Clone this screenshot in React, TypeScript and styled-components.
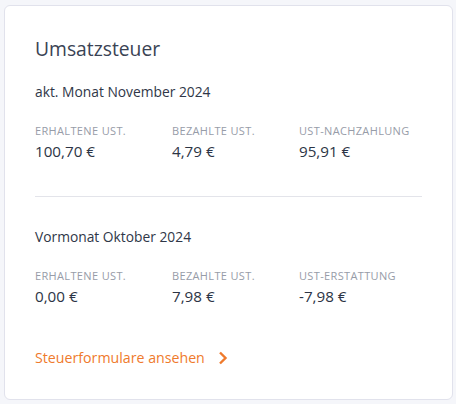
import styled, { createGlobalStyle } from "styled-components";

const GlobalStyle = createGlobalStyle`
  body {
    margin: 0;
    background: #f5f6fa;
    font-family: "Open Sans", "Noto Sans", sans-serif;
  }
`;

const Page = styled.div`
  padding: 5px 3px 4px 4px;
`;

const Card = styled.div`
  background: #fff;
  border: 1px solid #e1e2ec;
  border-radius: 6px;
  padding: 30px 30px 31px 30px;
  height: 395px;
  box-sizing: border-box;
`;

const Title = styled.h2`
  margin: 0;
  font-size: 19.3px;
  font-weight: 400;
  line-height: 26px;
  color: #3a4354;
`;

const Period = styled.div<{ $top: number }>`
  margin-top: ${p => p.$top}px;
  font-size: 13.8px;
  line-height: 20px;
  color: #2f3748;
`;

const Figures = styled.div`
  display: grid;
  grid-template-columns: 137px 127px auto;
  margin-top: 21px;
`;

const Figure = styled.div`
  display: flex;
  flex-direction: column;
  gap: 1px;
`;

const Label = styled.span`
  font-size: 11px;
  line-height: 16px;
  letter-spacing: 0.35px;
  text-transform: uppercase;
  color: #979ca8;
`;

const Value = styled.span`
  font-size: 15.2px;
  line-height: 22px;
  color: #2c3445;
`;

const Divider = styled.hr`
  border: 0;
  border-top: 1px solid #e3e4ea;
  margin: 34px 0 0;
`;

const Link = styled.a`
  display: inline-flex;
  align-items: center;
  gap: 13px;
  margin-top: 41px;
  font-size: 14.2px;
  line-height: 20px;
  color: #ef7a2c;
  text-decoration: none;
  cursor: pointer;
`;

const figures = [
  {
    period: "akt. Monat November 2024",
    items: [
      ["Erhaltene USt.", "100,70 €"],
      ["Bezahlte USt.", "4,79 €"],
      ["USt-Nachzahlung", "95,91 €"],
    ],
  },
  {
    period: "Vormonat Oktober 2024",
    items: [
      ["Erhaltene USt.", "0,00 €"],
      ["Bezahlte USt.", "7,98 €"],
      ["USt-Erstattung", "-7,98 €"],
    ],
  },
];

function Chevron() {
  return (
    <svg width="10" height="14" viewBox="0 0 10 14" fill="none">
      <path d="M2 1.5 L7.5 7 L2 12.5" stroke="#ef7a2c" strokeWidth="2.4" />
    </svg>
  );
}

export default function App() {
  return (
    <>
      <GlobalStyle />
      <Page>
        <Card>
          <Title>Umsatzsteuer</Title>
          {figures.map((block, i) => (
            <div key={block.period}>
              {i > 0 && <Divider />}
              <Period $top={i === 0 ? 20 : 30}>{block.period}</Period>
              <Figures>
                {block.items.map(([label, value]) => (
                  <Figure key={label}>
                    <Label>{label}</Label>
                    <Value>{value}</Value>
                  </Figure>
                ))}
              </Figures>
            </div>
          ))}
          <Link>
            Steuerformulare ansehen
            <Chevron />
          </Link>
        </Card>
      </Page>
    </>
  );
}
